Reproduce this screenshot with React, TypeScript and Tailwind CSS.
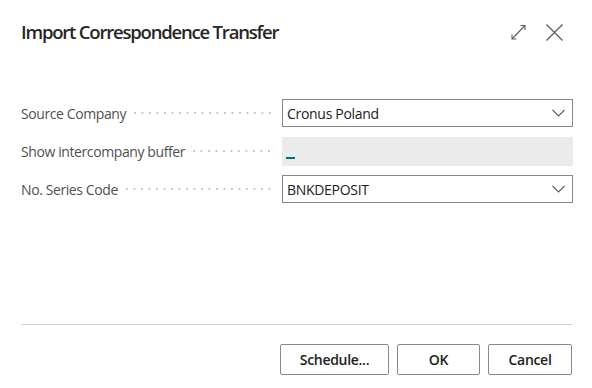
const font = { fontFamily: "'Segoe UI', 'Open Sans', sans-serif" };

function Leader() {
  return (
    <span className="mx-2 h-[2px] flex-1 bg-[linear-gradient(to_right,#c6c6c6_2px,transparent_2px)] bg-[length:7.5px_2px] bg-repeat-x" />
  );
}

function Field({ label, children }: { label: string; children: React.ReactNode }) {
  return (
    <div className="flex h-[28px] items-center">
      <div className="flex w-[261px] items-center pr-[2px]">
        <span className="text-[14px] tracking-[-0.4px] text-[#505050]">{label}</span>
        <Leader />
      </div>
      <div className="w-[291px]">{children}</div>
    </div>
  );
}

function Lookup({ value }: { value: string }) {
  return (
    <div className="flex h-[28px] items-center justify-between border border-[#8a8886] bg-white pl-[4px] pr-[7px]">
      <span className="text-[14px] tracking-[-0.3px] text-[#212121]">{value}</span>
      <svg width="13" height="8" viewBox="0 0 13 8" fill="none" stroke="#605e5c" strokeWidth="1.1">
        <path d="M0.5 1 L6.5 7 L12.5 1" />
      </svg>
    </div>
  );
}

export default function App() {
  return (
    <div className="h-[388px] w-[592px] bg-white" style={font}>
      <div className="flex h-[62px] items-center justify-between pl-[21px] pr-[29px] pt-[2px]">
        <h1 className="text-[18.5px] font-semibold tracking-[-1.2px] text-[#262626]">
          Import Correspondence Transfer
        </h1>
        <div className="flex items-center gap-[20px] text-[#605e5c]">
          <svg width="15" height="16" viewBox="0 0 15 16" fill="none" stroke="currentColor" strokeWidth="1.1">
            <path d="M1 15 L14 1.5 M9.5 1.5 H14 V6 M1 10.5 V15 H5.5" />
          </svg>
          <svg width="17" height="17" viewBox="0 0 17 17" fill="none" stroke="currentColor" strokeWidth="1.3">
            <path d="M0.5 0.5 L16.5 16.5 M16.5 0.5 L0.5 16.5" />
          </svg>
        </div>
      </div>

      <div className="mt-[37px] flex flex-col gap-[10px] pl-[21px]">
        <Field label="Source Company">
          <Lookup value="Cronus Poland" />
        </Field>
        <Field label="Show intercompany buffer">
          <div className="flex h-[29px] items-end bg-[#ebebeb] pb-[7px] pl-[4px]">
            <span className="h-[2px] w-[9px] bg-[#00707a]" />
          </div>
        </Field>
        <Field label="No. Series Code">
          <Lookup value="BNKDEPOSIT" />
        </Field>
      </div>

      <div className="mx-[21px] mt-[121px] w-[551px] border-t border-[#d0d0d0]" />

      <div className="mt-[19px] flex justify-end gap-[8px] pr-[20px]">
        {["Schedule...", "OK", "Cancel"].map((b) => (
          <button
            key={b}
            type="button"
            className={`h-[31px] rounded-[2px] border border-[#8a8886] bg-white text-[14px] font-semibold tracking-[-0.3px] text-[#212121] ${
              b === "Schedule..." ? "w-[109px]" : b === "OK" ? "w-[83px]" : "w-[84px]"
            }`}
          >
            {b}
          </button>
        ))}
      </div>
    </div>
  );
}
